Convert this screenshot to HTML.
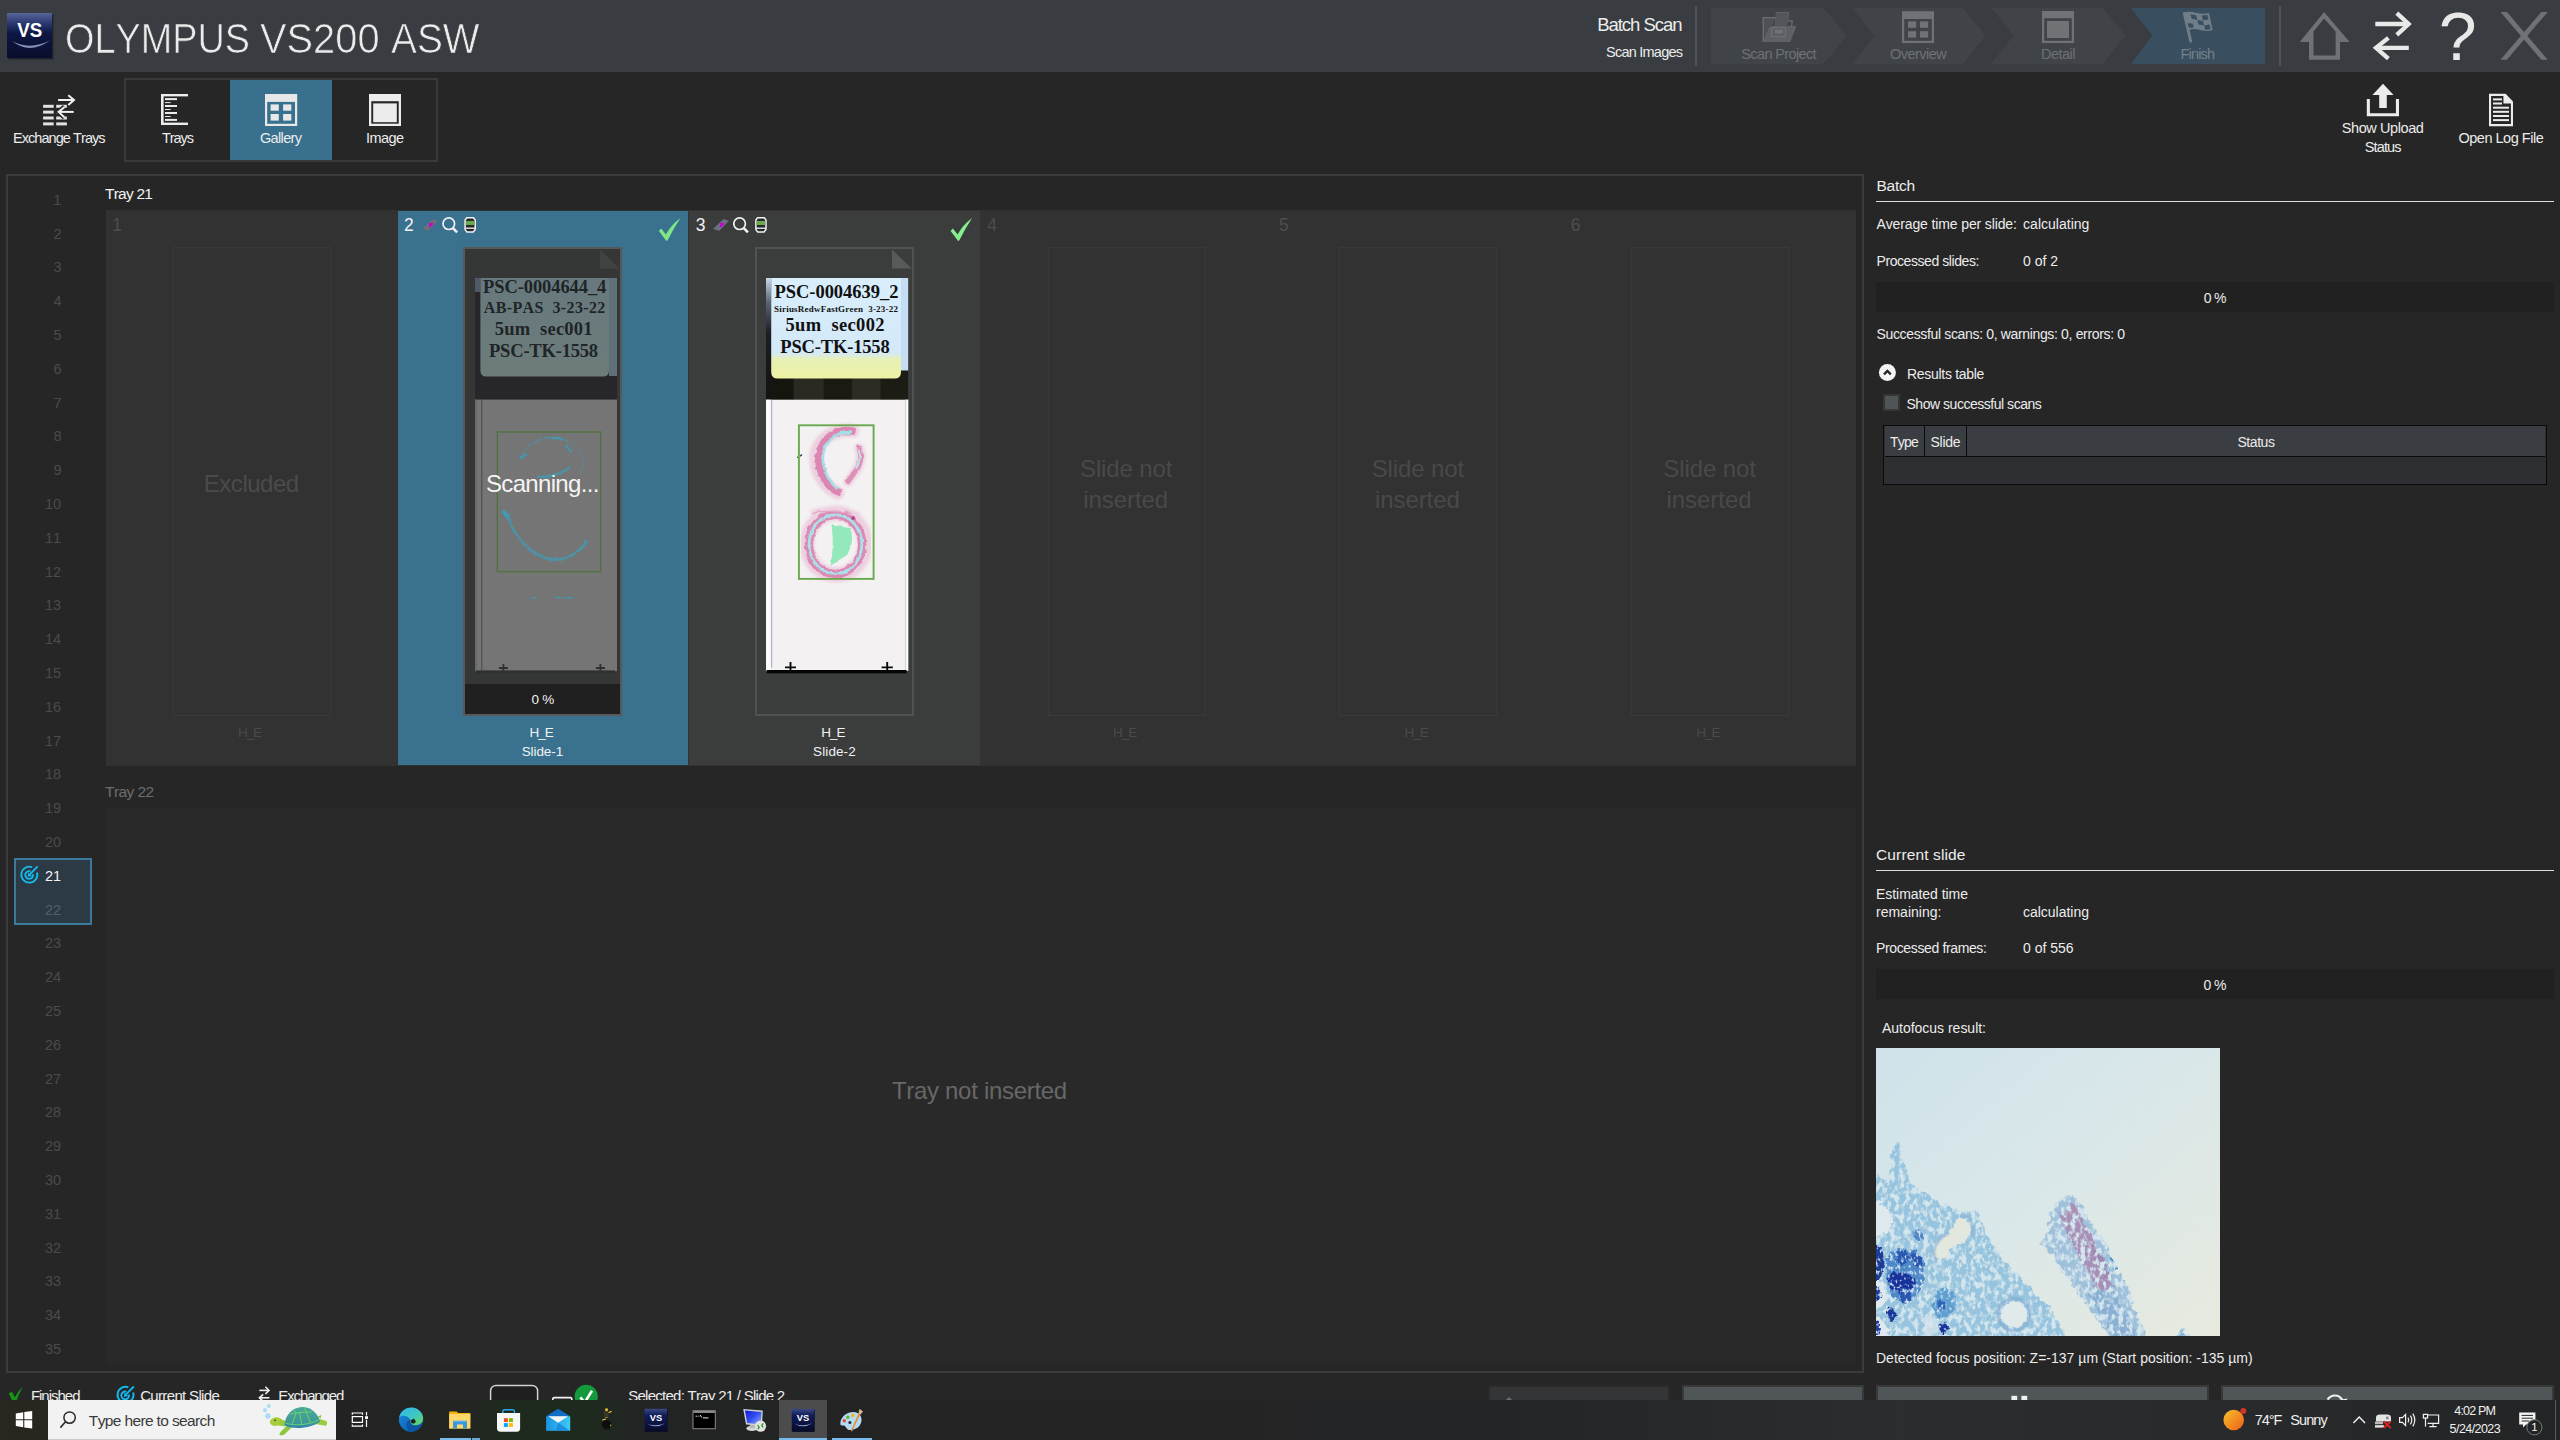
<!DOCTYPE html>
<html lang="en"><head><meta charset="utf-8"><title>OLYMPUS VS200 ASW - Batch Scan</title>
<style>
html,body{margin:0;padding:0;background:#262626;}
body{width:2560px;height:1440px;overflow:hidden;font-family:"Liberation Sans",sans-serif;}
#root{position:relative;width:2560px;height:1440px;overflow:hidden;background:#262626;}
.a{position:absolute;box-sizing:border-box;}
.t{position:absolute;white-space:pre;line-height:normal;font-kerning:none;z-index:2;margin:0;padding:0;}
.bm{display:inline-block;width:0;height:0;}
svg{position:absolute;overflow:visible;}
</style></head><body><div id="root">
<!-- ================= header bar ================= -->
<div class="a" style="left:0;top:0;width:2560px;height:72px;background:#393c40"></div>
<svg style="left:0;top:0" width="2560" height="172" viewBox="0 0 2560 172">
 <defs>
  <linearGradient id="vsg" x1="0" y1="0" x2="0" y2="1">
   <stop offset="0" stop-color="#56659a"/><stop offset="0.22" stop-color="#2c3a72"/><stop offset="0.45" stop-color="#0e1744"/><stop offset="1" stop-color="#090e2c"/>
  </linearGradient>
 </defs>
 <!-- VS logo -->
 <rect x="8.5" y="14.5" width="45" height="45" fill="#1b1d22" opacity=".75"/>
 <rect x="7" y="13" width="45" height="45" fill="url(#vsg)"/>
 <path d="M12 41 Q29.5 55 50 40.5 Q29.5 50.5 12 41Z" fill="#9aa6cc" opacity=".85"/>
 <text x="29.8" y="36.8" text-anchor="middle" font-family="Liberation Sans, sans-serif" font-weight="700" font-size="19.5" fill="#ffffff" textLength="25" lengthAdjust="spacingAndGlyphs">VS</text>
 <!-- separators -->
 <rect x="1695" y="6.2" width="2" height="59.8" fill="#505356"/>
 <rect x="2279" y="6.2" width="2" height="59.8" fill="#505356"/>
 <!-- wizard steps -->
 <polygon points="1711,8 1823.4,8 1847,35.4 1823.4,64 1711,64" fill="#404448"/>
 <polygon points="1852.2,8 1962.8,8 1985.6,35.4 1962.8,64 1852.2,64 1874.5,35.4" fill="#404448"/>
 <polygon points="1991.3,8 2102.8,8 2125.5,35.4 2102.8,64 1991.3,64 2013.5,35.4" fill="#404448"/>
 <polygon points="2131,8 2265,8 2265,64 2131,64 2152.3,35.4" fill="#394f5f"/>
 <!-- step1: scan project (folder w/ docs) -->
 <g fill="none" stroke="#696c6f" stroke-width="1.3" stroke-linejoin="miter">
  <path d="M1763.4 41 V17.8 H1775.6" />
  <path d="M1775.2 30 L1776.6 12.6 H1788.4 L1787.6 20.6"/>
  <path d="M1785 20.8 H1792.2 L1791.6 26.4"/>
  <path d="M1769.4 27 H1795.2 L1789.6 41.2 H1763.2Z" fill="#595c5f"/>
  <path d="M1772 27.2 H1785.6 V36.6 H1771.6Z" fill="#4d5053"/>
 </g>
 <path d="M1776 12.6 H1788.4 L1787.4 26.6 H1775Z" fill="#52555a"/>
 <path d="M1769.4 27 H1795.2 L1789.6 41.2 H1763.2Z" fill="#5f6265" opacity=".8"/>
 <rect x="1771.8" y="27.6" width="13.6" height="9" fill="none" stroke="#6d7073" stroke-width="1.2"/>
 <rect x="1775" y="29.8" width="8" height="3.6" fill="#707376"/>
 <path d="M1763.4 41 V17.8 H1775.6" fill="none" stroke="#696c6f" stroke-width="1.4"/>
 <path d="M1764 18.4 H1775 L1772 27 H1769.2 L1764 40Z" fill="#4d5054"/>
 <!-- step2: overview -->
 <g>
  <rect x="1902" y="11.2" width="32" height="31.8" fill="#707275"/>
  <rect x="1904.2" y="19" width="27.6" height="21.8" fill="#404448"/>
  <rect x="1908" y="21.4" width="8.2" height="6.4" fill="#707275"/><rect x="1920" y="21.4" width="8.2" height="6.4" fill="#707275"/>
  <rect x="1908" y="31.2" width="8.2" height="6.4" fill="#707275"/><rect x="1920" y="31.2" width="8.2" height="6.4" fill="#707275"/>
 </g>
 <!-- step3: detail -->
 <g>
  <rect x="2042" y="11" width="32" height="32" fill="#707275"/>
  <rect x="2044.2" y="18.2" width="27.6" height="22.6" fill="#404448"/>
  <rect x="2047" y="21" width="22" height="17" fill="#707275"/>
 </g>
 <!-- step4: flag -->
 <g>
  <path d="M2182.6 12.6 L2185.4 11.8 L2192.4 42 L2189.6 42.8Z" fill="#6f7e89"/>
  <path d="M2185 12.4 C2192 9.5 2199 16 2209 13 L2212.8 30 C2203 33.5 2197 26.5 2189 30Z" fill="#6f7e89"/>
  <g fill="#394f5f">
   <path d="M2190.6 14.3 l5.5 1 l1.2 4.6 l-5.6 -1.2Z"/><path d="M2201.8 15.6 l5.5 -.6 l1.1 4.4 l-5.6 .8Z"/>
   <path d="M2197.4 20 l5.6 .9 l1.1 4.5 l-5.6 -1Z"/><path d="M2192.8 23.6 l-5.2 -.4 l1 4.4 l5.2 .2Z"/>
   <path d="M2204.2 25.4 l5.4 -.8 l1 4.3 l-5.4 1Z"/><path d="M2192.9 23.4 l5.6 1 l1 4.2 l-5.6 -1.2Z" opacity="0"/>
  </g>
 </g>
 <!-- home (disabled) -->
 <path fill-rule="evenodd" fill="#6f7174" d="M2324.1 11.9 L2299.7 42.1 H2309 V59.8 H2340 V42.1 H2349.6 Z M2324.1 18.5 L2313.5 31.5 V55.5 H2335.6 V31.5 Z"/>
 <!-- swap arrows -->
 <g fill="none" stroke="#e9e9e9" stroke-width="4.3">
  <path d="M2375.3 24 H2408"/><path d="M2396.8 13.2 L2408.6 24 L2396.8 34.8" stroke-linejoin="miter"/>
  <path d="M2408.8 47.8 H2376"/><path d="M2388.4 37.8 L2376 47.8 L2388.4 58.6" stroke-linejoin="miter"/>
 </g>
 <!-- close X (disabled) -->
 <g fill="#6f7174"><path d="M2500.5 11.9 H2506.9 L2547.7 59.8 H2541.3Z"/><path d="M2547.7 11.9 H2541.3 L2500.5 59.8 H2506.9Z"/></g>
 <!-- ============ toolbar icons ============ -->
 <!-- exchange trays -->
 <g fill="#e2e2e2">
  <rect x="43.1" y="104.8" width="10.6" height="3"/><rect x="56.2" y="104.8" width="10.7" height="3"/>
  <rect x="43.1" y="110.6" width="10.6" height="3"/><rect x="56.2" y="110.6" width="10.7" height="3"/>
  <rect x="43.1" y="116.5" width="10.6" height="3"/><rect x="56.2" y="116.5" width="10.7" height="3"/>
  <rect x="43.1" y="122.4" width="10.6" height="3"/><rect x="56.2" y="122.4" width="10.7" height="3"/>
 </g>
 <g fill="none" stroke="#262626" stroke-width="5"><path d="M73.7 111.9 H60"/><path d="M64.6 107 L58.6 111.9 L64.6 117.4"/></g>
 <g fill="none" stroke="#f0f0f0" stroke-width="2">
  <path d="M58.1 100 H73.6"/><path d="M68.3 95.2 L74 100 L68.3 105"/>
  <path d="M73.7 111.9 H59.4"/><path d="M64.6 107 L58.6 111.9 L64.6 117.4"/>
 </g>
 <!-- trays -->
 <g fill="#ececec">
  <rect x="161" y="94" width="2.6" height="31"/><rect x="161" y="94" width="27" height="2.4"/><rect x="161" y="122.6" width="27" height="2.4"/>
  <rect x="165" y="98.1" width="12" height="2"/><rect x="165" y="105" width="12" height="2"/><rect x="165" y="112" width="12" height="2"/><rect x="165" y="118.9" width="12" height="2"/>
  <rect x="165" y="102.1" width="5.6" height="1"/><rect x="165" y="109" width="5.6" height="1"/><rect x="165" y="116" width="5.6" height="1"/>
 </g>
 <!-- image -->
 <g>
  <rect x="369" y="94" width="32" height="32" fill="#ececec"/>
  <rect x="371.3" y="101.2" width="27.4" height="22.5" fill="#262626"/>
  <rect x="373.2" y="103.4" width="23.6" height="18.8" fill="#ececec"/>
 </g>
 <!-- show upload status -->
 <g fill="#ececec">
  <path d="M2366.8 99 H2369.9 V113.2 H2395.9 V99 H2399 V116.3 H2366.8Z"/>
  <path d="M2383 83.8 L2393.6 95 H2386.8 V108 H2379.2 V95 H2372.4Z"/>
 </g>
 <!-- open log file -->
 <g>
  <path d="M2489 93.8 H2505.6 L2513 101.4 V126.2 H2489Z" fill="#ececec"/>
  <path d="M2491.1 96 H2503.4 V103.6 H2510.9 V124 H2491.1Z" fill="#262626"/>
  <g fill="#ececec"><rect x="2493" y="98.4" width="9" height="2"/><rect x="2493" y="102.5" width="9" height="2"/>
  <rect x="2493" y="106.7" width="16" height="2"/><rect x="2493" y="110.8" width="16" height="2"/><rect x="2493" y="115" width="16" height="2"/><rect x="2493" y="119.1" width="16" height="2"/></g>
 </g>
</svg>
<!-- toolbar view group -->
<div class="a" style="left:124px;top:78px;width:314px;height:84px;border:2px solid #3a3a3a"></div>
<div class="a" style="left:230px;top:80px;width:102px;height:80px;background:#38708d"></div>
<svg style="left:0;top:0" width="400" height="172" viewBox="0 0 400 172">
 <rect x="265" y="94" width="32.2" height="32" fill="#e8e8e8"/>
 <rect x="267.2" y="101.9" width="27.8" height="21.9" fill="#38708d"/>
 <rect x="270.6" y="104.4" width="8.2" height="6.3" fill="#e8e8e8"/><rect x="283.1" y="104.4" width="8.2" height="6.3" fill="#e8e8e8"/>
 <rect x="270.6" y="114" width="8.2" height="6.6" fill="#e8e8e8"/><rect x="283.1" y="114" width="8.2" height="6.6" fill="#e8e8e8"/>
</svg>

<!-- ================= main gallery panel ================= -->
<div class="a" style="left:6px;top:174px;width:1858px;height:1199px;border:2px solid #3b3b3b"></div>
<!-- tray index highlight -->
<div class="a" style="left:14px;top:858px;width:78px;height:67px;background:#2b3a44;border:2px solid #3a7a9c"></div>
<svg style="left:18px;top:862px" width="24" height="24" viewBox="0 0 24 24">
 <g fill="none" stroke="#14b9ee" stroke-width="1.9">
  <path d="M14.2 5.2 A8 8 0 1 0 19 10.4"/>
  <path d="M12.4 9.3 A3.9 3.9 0 1 0 15 12.2"/>
  <path d="M19.6 4.4 L11.4 12.8"/>
 </g>
 <path d="M9.6 14.8 L10.4 10.4 L14 14Z" fill="#14b9ee"/>
</svg>
<!-- tray 21 container -->
<div class="a" style="left:105.5px;top:210px;width:1750px;height:555.5px;background:#323232"></div>
<div class="a" style="left:398px;top:211px;width:290.3px;height:554.4px;background:#39718e"></div>
<div class="a" style="left:689px;top:211px;width:290.6px;height:554.4px;background:#3b3d3d"></div>
<!-- empty thumb frames -->
<div class="a" style="left:172.6px;top:247.4px;width:158px;height:468.4px;border:1.2px solid #393939"></div>
<div class="a" style="left:1047.8px;top:247.4px;width:158px;height:468.4px;border:1.2px solid #393939"></div>
<div class="a" style="left:1339.3px;top:247.4px;width:158px;height:468.4px;border:1.2px solid #393939"></div>
<div class="a" style="left:1631px;top:247.4px;width:158px;height:468.4px;border:1.2px solid #393939"></div>
<!-- tray 22 container -->
<div class="a" style="left:105.5px;top:808px;width:1750px;height:556.2px;background:#292929"></div>
<!-- ================= slide thumbnails (tray 21) ================= -->
<svg style="left:0;top:0" width="1000" height="780" viewBox="0 0 1000 780">
 <defs>
  <linearGradient id="lab3" x1="0" y1="0" x2="0" y2="1">
   <stop offset="0" stop-color="#d9eefc"/><stop offset="0.745" stop-color="#d4e9f8"/><stop offset="0.81" stop-color="#e8f0b4"/><stop offset="1" stop-color="#eef2a4"/>
  </linearGradient>
  <linearGradient id="lstrip3" x1="0" y1="0" x2="0" y2="1">
   <stop offset="0" stop-color="#c9d9ea"/><stop offset="0.2" stop-color="#5a6474"/><stop offset="0.45" stop-color="#1c1e24"/><stop offset="1" stop-color="#121214"/>
  </linearGradient>
  <linearGradient id="band3" x1="0" y1="0" x2="1" y2="0">
   <stop offset="0" stop-color="#15150f"/><stop offset="0.19" stop-color="#15150f"/><stop offset="0.2" stop-color="#2a2a22"/><stop offset="0.4" stop-color="#2a2a22"/><stop offset="0.41" stop-color="#1a1a13"/><stop offset="0.6" stop-color="#1a1a13"/><stop offset="0.61" stop-color="#2c2c24"/><stop offset="0.8" stop-color="#2c2c24"/><stop offset="0.81" stop-color="#1c1c15"/><stop offset="1" stop-color="#1c1c15"/>
  </linearGradient>
  <linearGradient id="lab2" x1="0" y1="0" x2="0" y2="1">
   <stop offset="0" stop-color="#67797e"/><stop offset="1" stop-color="#6d7c7a"/>
  </linearGradient>
  <filter id="b1" x="-10%" y="-10%" width="120%" height="120%"><feGaussianBlur stdDeviation="0.7"/></filter>
  <filter id="tis" x="-10%" y="-10%" width="120%" height="120%"><feTurbulence type="fractalNoise" baseFrequency="0.18" numOctaves="2" seed="5" result="n"/><feDisplacementMap in="SourceGraphic" in2="n" scale="3.2" xChannelSelector="R" yChannelSelector="G"/><feGaussianBlur stdDeviation="0.55"/></filter>
  <filter id="b2" x="-10%" y="-10%" width="120%" height="120%"><feGaussianBlur stdDeviation="1.4"/></filter>
  <!-- header icons for a slide cell (origin = cell x) -->
  <g id="hdr">
   <path d="M24.1 228.8 L34.6 219.1 L39.9 221.1 L30.1 231.1Z" fill="#6c6e80"/>
   <path d="M30.9 223 h4 v2.3 h-1.8 v1.6 h-2.2Z" fill="#cc00cc"/>
   <circle cx="50.6" cy="223.7" r="5.8" fill="none" stroke="#f2f2f2" stroke-width="1.7"/>
   <path d="M54.8 228.2 L58.9 232.4" stroke="#f2f2f2" stroke-width="2.6" fill="none"/>
   <path d="M68.6 217.8 H75.3 L77 220 V229.6 L75 232 H68.8 L66.9 229.6 V220Z" fill="#26282a" stroke="#f2f2f2" stroke-width="1.5" stroke-linejoin="round"/>
   <rect x="67.7" y="221" width="8.6" height="4" fill="#6aa84f"/>
   <path d="M67 228.2 H77" stroke="#f2f2f2" stroke-width="1.3"/>
  </g>
  <path id="chk" d="M952.9 228.6 L950.6 230.9 L958.1 240.9 L959.4 240.2 Q964.5 229.5 972.1 217.9 Q962.5 225 957.6 234.6 Z"/>
 </defs>

 <!-- ===== cell 2 (selected, scanning, dimmed) ===== -->
 <use href="#hdr" x="398.2" y="0"/>
 <use href="#chk" x="-291.7" y="0" fill="#80e585"/>
 <rect x="464" y="248" width="157" height="467" fill="#353737" stroke="#575858" stroke-width="2"/>
 <path d="M600 249.4 V268.8 H619.8Z" fill="#414243"/>
 <!-- slide body -->
 <rect x="475" y="278" width="142" height="122" fill="#27262b"/>
 <rect x="475" y="278" width="5.4" height="14" fill="#50596a"/>
 <rect x="609" y="278" width="8" height="98" fill="#5f707a"/>
 <path d="M480.4 278 H609 V370.5 Q609 376.5 603 376.5 H486.4 Q480.4 376.5 480.4 370.5Z" fill="url(#lab2)"/>
 <rect x="475" y="399.6" width="142" height="271.6" fill="#757575"/>
 <rect x="481.2" y="399.6" width="1.1" height="271" fill="#4c4c4c"/>
 <rect x="475" y="399.6" width="2" height="271" fill="#6a6a6a"/>
 <rect x="476" y="670.4" width="139" height="2.8" fill="#2f3030"/>
 <path d="M503.4 664 V671 M499 668 H508 M600.4 664 V671 M596 668 H605" stroke="#2f3030" stroke-width="1.8" fill="none"/>
 <!-- tissue (dim cyan) -->
 <g fill="none" stroke="#3f9cb8" stroke-linecap="round" filter="url(#tis)">
  <path d="M521 459 C522 452 529 443 541 439 C551 436 562 437 567 441" stroke-width="2.4" opacity=".38" stroke-dasharray="9 3 5 4"/>
  <path d="M552 437.5 L562 439.5 M566 446 L571 451" stroke-width="2.6" opacity=".75"/>
  <path d="M521 457 L526 455" stroke-width="3" opacity=".7"/>
  <path d="M538 476.5 C545 478 560 475 569 468" stroke-width="2.6" opacity=".75"/>
  <path d="M572 443 C583 450 586 464 580 474" stroke-width="2" opacity=".22"/>
  <path d="M503 513 C506 515 509 519 511 524 C518 542 535 557 552 559.5 C566 561 580 552 587 541" stroke-width="3" opacity=".7"/>
  <path d="M503 512 L508 516" stroke-width="4.5" opacity=".8"/>
  <path d="M530 598.3 H536 M556 597.5 H574" stroke-width="1.3" opacity=".8"/>
 </g>
 <rect x="497.3" y="432" width="103.4" height="139.6" fill="none" stroke="#52723f" stroke-width="1.4"/>
 <!-- progress strip -->
 <rect x="465" y="684" width="155" height="30" fill="#202020"/>

 <!-- ===== cell 3 ===== -->
 <use href="#hdr" x="689" y="0"/>
 <use href="#chk" x="0" y="0" fill="#86ee8e"/>
 <rect x="756" y="248" width="157" height="467" fill="#3b3d3d" stroke="#4f5152" stroke-width="2"/>
 <path d="M892 249.5 V268.4 H911.6Z" fill="#57595b"/>
 <rect x="766" y="278" width="142.2" height="122" fill="url(#band3)"/>
 <rect x="766" y="278" width="5.2" height="122" fill="url(#lstrip3)"/>
 <rect x="901" y="278" width="7.2" height="92.5" fill="#c4dcf4"/>
 <path d="M771.2 278 H901 V372 Q901 378.6 894.5 378.6 H777.7 Q771.2 378.6 771.2 372Z" fill="url(#lab3)"/>
 <rect x="766" y="399.7" width="142.2" height="271" fill="#f3f1f2"/>
 <rect x="766" y="399.7" width="4.6" height="271" fill="#fbfbfb"/>
 <rect x="771.2" y="399.7" width="1" height="268" fill="#a9a2bd"/>
 <rect x="905.2" y="399.7" width="1" height="271" fill="#c9c6d2"/>
 <rect x="906.2" y="399.7" width="2" height="271" fill="#fdfdfd"/>
 <rect x="766.6" y="670" width="140" height="3.3" fill="#050505"/>
 <path d="M790.5 662 V671 M785 667.4 H796 M887.2 662 V671 M881.6 667.4 H892.8" stroke="#0a0a0a" stroke-width="1.9" fill="none"/>
 <!-- tissue top (C shape) -->
 <g fill="none" stroke-linecap="round">
  <g filter="url(#b2)" opacity=".42" stroke="#e3a3c6">
   <path d="M853 431 C838 428 822 436 817 450 C812 466 822 486 838 493" stroke-width="13"/>
   <path d="M859 448 C863 456 860 466 855 472 L848 482" stroke-width="9"/>
   <ellipse cx="836" cy="544" rx="29" ry="31" stroke-width="15"/>
   <path d="M812 512 C824 507 846 508 858 514" stroke-width="4"/>
  </g>
  <g filter="url(#tis)">
   <path d="M852 431 C839 428.5 825 436 820 450 C815.5 466 824.5 485 838 492" stroke="#d774a6" stroke-width="7.6" opacity=".8"/>
   <path d="M850 432.6 C839 431 828.5 438 824 450 C820 464 827 480.5 837 488" stroke="#a6dfe8" stroke-width="2.6"/>
   <path d="M858.5 447 C862.5 456 860.5 465 855.5 471 L848 481.5" stroke="#db84b0" stroke-width="5" opacity=".82"/>
   <path d="M858.6 450 C861 456 859.5 463 856 468" stroke="#bfe6ec" stroke-width="1.8"/>
   <path d="M797.6 457.4 L801.8 455" stroke="#3a4a6a" stroke-width="1.5"/>
   <ellipse cx="835.5" cy="544.3" rx="26.6" ry="29.6" stroke="#d774a6" stroke-width="8.4" opacity=".78"/>
   <ellipse cx="835.5" cy="544.3" rx="26.4" ry="29.4" stroke="#a9e0e9" stroke-width="2.8"/>
   <path d="M813 513.5 C822 510.5 840 510.5 851 513.5" stroke="#e3a8c8" stroke-width="1.6"/>
   <path d="M831.6 525 L850 528 Q855.5 540 847 555 L830.6 565.5 Q834.5 545 831.6 525Z" fill="#93e9ba" stroke="none"/>
   <circle cx="853" cy="518" r="2" fill="#b8448c" stroke="none"/>
  </g>
 </g>
 <rect x="798.9" y="425.3" width="74.7" height="153.6" fill="none" stroke="#6aa84f" stroke-width="1.9"/>
</svg>
<!-- ================= right info panel ================= -->
<div class="a" style="left:1876px;top:200.8px;width:678px;height:1.5px;background:#dcdcdc"></div>
<div class="a" style="left:1876px;top:282px;width:678px;height:30px;background:#212121"></div>
<!-- results expander -->
<svg style="left:1878px;top:363px" width="20" height="20" viewBox="0 0 20 20">
 <circle cx="9.4" cy="9.6" r="8.5" fill="#f4f4f4"/>
 <path d="M6 11.4 L9.4 7.9 L12.8 11.4" fill="none" stroke="#262626" stroke-width="2.3"/>
</svg>
<div class="a" style="left:1883.2px;top:394.3px;width:17px;height:16.6px;background:#4f5457;border:2px solid #363636"></div>
<!-- results table -->
<div class="a" style="left:1883px;top:425px;width:664px;height:60.2px;background:#2d2f33;border:1.6px solid #0a0a0a"></div>
<div class="a" style="left:1884.6px;top:426.2px;width:660.8px;height:30.9px;background:#3a3d41;border-bottom:1.3px solid #0a0a0a"></div>
<div class="a" style="left:1923.8px;top:426px;width:1.3px;height:30px;background:#0a0a0a"></div>
<div class="a" style="left:1965.6px;top:426px;width:1.3px;height:30px;background:#0a0a0a"></div>
<!-- current slide -->
<div class="a" style="left:1876px;top:869.8px;width:678px;height:1.5px;background:#dcdcdc"></div>
<div class="a" style="left:1876px;top:969px;width:678px;height:30.2px;background:#212121"></div>
<!-- autofocus image -->
<svg style="left:1876px;top:1048px" width="344" height="288" viewBox="0 0 344 288">
 <defs>
  <linearGradient id="afbg" x1="0" y1="0" x2="1" y2="1">
   <stop offset="0" stop-color="#d0e3ea"/><stop offset="0.45" stop-color="#dae8ea"/><stop offset="1" stop-color="#e9ebdf"/>
  </linearGradient>
  <clipPath id="afc"><rect x="0" y="0" width="344" height="288"/></clipPath>
  <!-- ragged edge + fibrous texture -->
  <filter id="afrag" x="-5%" y="-5%" width="110%" height="110%" color-interpolation-filters="sRGB">
   <feTurbulence type="fractalNoise" baseFrequency="0.16" numOctaves="2" seed="11" result="n1"/>
   <feDisplacementMap in="SourceGraphic" in2="n1" scale="9" xChannelSelector="R" yChannelSelector="G" result="d"/>
   <feGaussianBlur in="d" stdDeviation="0.5" result="db"/>
   <feTurbulence type="fractalNoise" baseFrequency="0.21 0.15" numOctaves="3" seed="4" result="n2"/>
   <feColorMatrix in="n2" type="matrix" values="0 0 0 0 0.83  0 0 0 0 0.90  0 0 0 0 0.93  0 0 0 4.6 -2.0" result="pale"/>
   <feComposite in="pale" in2="db" operator="in" result="paleIn"/>
   <feMerge><feMergeNode in="db"/><feMergeNode in="paleIn"/></feMerge>
  </filter>
  <filter id="afblob" x="-10%" y="-10%" width="120%" height="120%" color-interpolation-filters="sRGB">
   <feTurbulence type="fractalNoise" baseFrequency="0.2" numOctaves="2" seed="21" result="n1"/>
   <feDisplacementMap in="SourceGraphic" in2="n1" scale="7" xChannelSelector="R" yChannelSelector="G" result="d"/>
   <feGaussianBlur in="d" stdDeviation="0.7"/>
  </filter>
  <filter id="afblob2" x="-10%" y="-10%" width="120%" height="120%" color-interpolation-filters="sRGB">
   <feTurbulence type="fractalNoise" baseFrequency="0.2" numOctaves="2" seed="21" result="n1"/>
   <feDisplacementMap in="SourceGraphic" in2="n1" scale="7" xChannelSelector="R" yChannelSelector="G" result="d"/>
   <feGaussianBlur in="d" stdDeviation="0.7" result="db"/>
   <feTurbulence type="fractalNoise" baseFrequency="0.28 0.22" numOctaves="2" seed="9" result="n2"/>
   <feColorMatrix in="n2" type="matrix" values="0 0 0 0 0.80  0 0 0 0 0.88  0 0 0 0 0.95  0 0 0 5 -2.6" result="pale"/>
   <feComposite in="pale" in2="db" operator="in" result="paleIn"/>
   <feMerge><feMergeNode in="db"/><feMergeNode in="paleIn"/></feMerge>
  </filter>
  <filter id="afgrain" x="0" y="0" width="100%" height="100%" color-interpolation-filters="sRGB">
   <feTurbulence type="fractalNoise" baseFrequency="0.9" numOctaves="1" seed="2" result="g"/>
   <feColorMatrix in="g" type="matrix" values="0 0 0 0 0.72  0 0 0 0 0.80  0 0 0 0 0.84  0 0 0 0.9 -0.36"/>
  </filter>
  <filter id="afsoft"><feGaussianBlur stdDeviation="1.2"/></filter>
 </defs>
 <rect width="344" height="288" fill="url(#afbg)"/>
 <rect width="344" height="288" filter="url(#afgrain)" opacity=".35"/>
 <g clip-path="url(#afc)">
  <!-- main tissue mass -->
  <g filter="url(#afrag)">
   <path d="M-8 124 L4 130 L12 132 L16 118 L18 96 L22 92 L26 110 L34 134 L52 148 L64 156 L78 160 L88 166 L100 162 L106 174 L112 190 L132 218 L152 238 L172 258 L184 276 L194 296 L-8 296Z" fill="#96c3dd"/>
   <path d="M176 160 L184 152 L196 146 L206 160 L218 180 L232 200 L240 222 L252 240 L258 262 L268 282 L274 296 L236 296 L220 270 L198 238 L176 208 L166 196 L172 180Z" fill="#9fc0da"/>
   <path d="M296 296 L306 280 L320 296Z" fill="#86b6d8"/>
   <!-- mauve streaks in 2nd fragment -->
   <path d="M184 168 L198 156 L216 188 L232 222 L238 240 L222 244 L204 212 L192 188Z" fill="#a68bb2" opacity=".9"/>
   <path d="M196 152 L204 168 L200 172 L192 158Z" fill="#ad90b6" opacity=".85"/>
   <path d="M214 200 L222 196 L234 226 L228 230Z" fill="#9b86b2" opacity=".8"/>
   <path d="M212 246 L236 238 L250 268 L262 290 L240 296 L226 272Z" fill="#86aed2" opacity=".9"/>
   <circle cx="236" cy="212" r="1.6" fill="#3b8fd0"/><circle cx="240" cy="220" r="1.4" fill="#3b8fd0"/>
  </g>
  <!-- lumens / pale holes -->
  <g filter="url(#afblob)">
   <path d="M-6 150 C6 152 16 162 16 174 C14 186 4 190 -6 188Z" fill="#dde9ec"/>
   <path d="M84 170 C92 168 96 176 94 186 C92 194 82 196 76 200 C72 208 66 214 60 210 C56 202 62 192 70 188 C76 182 78 174 84 170Z" fill="#e3e8de"/>
   <circle cx="138" cy="266.5" r="13.5" fill="#e1eaeb"/>
   <path d="M-6 226 C8 230 14 244 8 256 C2 262 -4 262 -6 262Z" fill="#dfe9ee"/>
   <path d="M-4 270 C6 268 14 276 12 290 L-4 292Z" fill="#dfe8ee"/>
   <path d="M46 270 C54 262 66 270 62 284 L48 292Z" fill="#d6e4ec" opacity=".8"/>
  </g>
  <circle cx="138" cy="266.5" r="16" fill="none" stroke="#7fa9cf" stroke-width="2.6" filter="url(#afsoft)" opacity=".85"/>
  <path d="M84 168 C94 166 98 176 96 188 M60 212 C54 202 62 190 72 186" fill="none" stroke="#86a9cf" stroke-width="1.6" filter="url(#afsoft)"/>
  <ellipse cx="30" cy="228" rx="21" ry="23" fill="none" stroke="#9cc3de" stroke-width="1.6" opacity=".8"/>
  <!-- medium + dark blue clusters -->
  <g filter="url(#afblob2)">
   <path d="M14 204 C26 198 46 200 48 214 C50 230 44 246 34 252 C26 256 14 250 12 238 C10 226 8 212 14 204Z" fill="#4f88c6"/>
   <path d="M60 244 C68 236 80 240 80 252 C80 264 70 272 62 270 C56 264 56 252 60 244Z" fill="#5f9fd0"/>
   <path d="M36 186 C42 180 50 184 48 190 C44 194 38 192 36 186Z" fill="#4f88c6"/>
   <path d="M-4 196 C6 194 10 206 8 216 C6 228 2 236 -4 238Z" fill="#1c3a98"/>
   <path d="M20 204 C28 200 36 204 34 212 C32 218 22 218 20 212Z" fill="#2858b0"/>
   <path d="M36 206 C44 202 48 210 46 216 C42 222 34 218 36 206Z" fill="#2a57ae"/>
   <path d="M14 226 C24 222 40 226 40 236 C36 246 22 248 14 240Z" fill="#17329a"/>
   <path d="M24 240 C32 238 38 246 34 254 C28 258 22 250 24 240Z" fill="#2a57ae"/>
   <path d="M-4 238 C4 236 8 246 4 252 L-4 254Z" fill="#1d3c9c"/>
   <path d="M12 260 C20 256 22 268 16 274 C10 274 10 266 12 260Z" fill="#1a379a"/>
   <path d="M-4 272 C4 272 6 282 2 288 L-4 288Z" fill="#1d3c9c"/>
   <path d="M62 252 C68 250 72 256 68 262 C64 264 60 258 62 252Z" fill="#2d63b6"/>
   <path d="M62 278 l8 -4 l4 8 l-8 4Z" fill="#17329a"/>
  </g>
 </g>
</svg>
<!-- bottom action buttons (cut by taskbar) -->
<div class="a" style="left:1487.5px;top:1385px;width:182.5px;height:40px;background:#333537;border:2.2px solid #2a2a2a"></div>
<div class="a" style="left:1681.9px;top:1384.8px;width:182.4px;height:40px;background:#505558;border:2.1px solid #393939"></div>
<div class="a" style="left:1875.8px;top:1384.8px;width:333px;height:40px;background:#505558;border:2.1px solid #393939"></div>
<div class="a" style="left:2221px;top:1384.8px;width:333px;height:40px;background:#505558;border:2.1px solid #393939"></div>
<svg style="left:0;top:1380px" width="2560" height="24" viewBox="0 1380 2560 24">
 <path d="M1506 1400 L1509 1397 L1512 1400Z" fill="#6a6c6e"/>
 <rect x="2011.4" y="1395.8" width="5.8" height="6" fill="#f0f0f0"/><rect x="2021.4" y="1395.8" width="5.8" height="6" fill="#f0f0f0"/>
 <path d="M2327.6 1399.6 C2331 1394.4 2338.6 1393.6 2342.6 1400.4" fill="none" stroke="#f0f0f0" stroke-width="2.2"/>
 <path d="M2338.4 1400 L2347.6 1398.4 L2345 1403Z" fill="#f0f0f0"/>
 <!-- legend icons -->
 <path d="M8.8 1393.6 L11.8 1391.4 L14.8 1397.2 Q18.6 1390.6 23 1386.6 Q19.2 1393 15.6 1402.6 L13.2 1402.6Z" fill="#149814"/>
 <g fill="none" stroke="#12b8ee" stroke-width="1.9">
  <path d="M128.4 1387.3 A8 8 0 1 0 133.2 1392.5"/>
  <path d="M126.4 1391.7 A3.9 3.9 0 1 0 129 1394.5"/>
  <path d="M133.8 1386.5 L125.6 1394.9"/>
 </g>
 <path d="M123.8 1396.9 L124.6 1392.5 L128.2 1396.1Z" fill="#12b8ee"/>
 <g fill="none" stroke="#f0f0f0" stroke-width="1.6">
  <path d="M259.4 1390.4 H268.6"/><path d="M265.4 1386.8 L269 1390.4 L265.4 1394"/>
  <path d="M269.4 1397.8 H259.8"/><path d="M263.2 1394.4 L259.4 1397.8 L263.2 1401.4"/>
 </g>
 <rect x="490.6" y="1385.4" width="47" height="30" rx="5.5" fill="#1f1f1f" stroke="#d2d2d2" stroke-width="1.5"/>
 <rect x="552.8" y="1397.6" width="19" height="10" rx="1.5" fill="none" stroke="#f2f2f2" stroke-width="1.6"/>
 <circle cx="586.2" cy="1396.4" r="11.6" fill="#14993c"/>
 <path d="M580.4 1397.4 L584.6 1402.6 L592 1390.8" fill="none" stroke="#ffffff" stroke-width="2.6"/>
</svg>
<!-- ================= windows taskbar ================= -->
<div class="a" style="left:0;top:1400px;width:2560px;height:40px;z-index:5;background:linear-gradient(90deg,#29271f 0px,#27261f 46px,#222322 360px,#222522 470px,#1f2a1e 500px,#1f2a1e 590px,#222423 640px,#232324 900px,#242526 1500px,#2b2d2f 1900px,#28292b 2300px,#232425 2560px)">
 <div class="a" style="left:779px;top:0;width:48.2px;height:40px;background:#4c4c4c"></div>
 <div class="a" style="left:48px;top:0;width:288px;height:40px;background:#f2f2f2;border-bottom:1.4px solid #c9c9c9"></div>
 <div class="a" style="left:440.2px;top:37.9px;width:31px;height:2.1px;background:#78bbef"></div>
 <div class="a" style="left:472.4px;top:37.9px;width:7.2px;height:2.1px;background:#6aa6d6"></div>
 <div class="a" style="left:779px;top:37.9px;width:48.2px;height:2.1px;background:#78bbef"></div>
 <div class="a" style="left:832px;top:37.9px;width:40px;height:2.1px;background:#78bbef"></div>
 <div class="a" style="left:2555.2px;top:0;width:1px;height:40px;background:#5a5a5a"></div>
 <svg style="left:0;top:0" width="2560" height="40" viewBox="0 1400 2560 40">
  <defs>
   <linearGradient id="vst" x1="0" y1="0" x2="0" y2="1"><stop offset="0" stop-color="#3b4a86"/><stop offset="0.3" stop-color="#0f1c5a"/><stop offset="1" stop-color="#070b2a"/></linearGradient>
   <linearGradient id="edge1" x1="0" y1="0" x2="1" y2="1"><stop offset="0" stop-color="#2fb6ee"/><stop offset="0.55" stop-color="#3fc8c0"/><stop offset="1" stop-color="#66d64e"/></linearGradient>
   <linearGradient id="edge2" x1="0" y1="0" x2="1" y2="1"><stop offset="0" stop-color="#1b8fe6"/><stop offset="1" stop-color="#0b4f9e"/></linearGradient>
   <linearGradient id="sun" x1="0" y1="0" x2="1" y2="1"><stop offset="0" stop-color="#f6c22c"/><stop offset="1" stop-color="#ee5d17"/></linearGradient>
   <linearGradient id="mailg" x1="0" y1="0" x2="1" y2="0"><stop offset="0" stop-color="#1b93e4"/><stop offset="1" stop-color="#3ccbf5"/></linearGradient>
   <linearGradient id="shell" x1="0" y1="0" x2="0" y2="1"><stop offset="0" stop-color="#4aa79a"/><stop offset="0.7" stop-color="#3d9b96"/><stop offset="1" stop-color="#2f7fae"/></linearGradient>
   <linearGradient id="rdp" x1="0" y1="0" x2="1" y2="1"><stop offset="0" stop-color="#1418d8"/><stop offset="0.5" stop-color="#3050f0"/><stop offset="1" stop-color="#9ab0ff"/></linearGradient>
   <g id="vsicon">
    <rect x="0.6" y="0.8" width="22.4" height="22.2" fill="#0a0d24"/>
    <rect x="0" y="0" width="22.4" height="22.2" fill="url(#vst)"/>
    <path d="M2.4 14.6 Q11.2 20.4 20.6 14.4 Q11.2 18.4 2.4 14.6Z" fill="#a9b4d8" opacity=".9"/>
    <text x="11.3" y="12.4" text-anchor="middle" font-family="Liberation Sans, sans-serif" font-weight="700" font-size="9.6" fill="#ffffff" textLength="12.4" lengthAdjust="spacingAndGlyphs">VS</text>
   </g>
  </defs>
  <!-- start -->
  <g fill="#ffffff"><path d="M15.8 1413.4 L23.2 1412.3 V1419.2 H15.8Z"/><path d="M24.3 1412.1 L32.2 1411 V1419.2 H24.3Z"/><path d="M15.8 1420.3 H23.2 V1427.2 L15.8 1426.1Z"/><path d="M24.3 1420.3 H32.2 V1428.5 L24.3 1427.4Z"/></g>
  <!-- search glyph -->
  <circle cx="69.6" cy="1417.6" r="5.7" fill="none" stroke="#2b2b2b" stroke-width="1.5"/><path d="M65.5 1421.8 L60.4 1427.6" stroke="#2b2b2b" stroke-width="1.6"/>
  <!-- turtle -->
  <g>
   <circle cx="268.8" cy="1406" r="1.9" fill="#a9dcf8"/><circle cx="265" cy="1410.3" r="2.1" fill="#a9dcf8"/><circle cx="267.9" cy="1416" r="2.7" fill="#a9dcf8"/>
   <path d="M319 1418.8 L326.6 1421 Q328 1424.4 325.6 1425.8 L316.6 1424.2Z" fill="#9acb45"/>
   <path d="M317.8 1416.8 L321.6 1414.8 L320.6 1418.4Z" fill="#8cc63f"/>
   <path d="M287 1425.6 L281 1431.4 Q278 1434.6 280.8 1435.6 L284.4 1434.4 L291.6 1427.4Z" fill="#8cc63f"/>
   <ellipse cx="276" cy="1421.6" rx="6.2" ry="4.3" fill="#a8cf3b" transform="rotate(-8 276 1421.6)"/>
   <path d="M280 1419 L286 1421 L285 1426.6 L278.6 1425.4Z" fill="#9fca40"/>
   <circle cx="275.1" cy="1420.3" r="0.9" fill="#4a2a4a"/>
   <path d="M284.4 1425.6 C285 1414.6 293 1407.2 302 1407 C312 1407 318.6 1414.6 320 1421.8 C312.6 1427.4 296 1430.6 284.4 1425.6Z" fill="url(#shell)"/>
   <g fill="none" stroke="#6fd868" stroke-width=".9">
    <path d="M285.6 1423.2 C296 1426.4 310 1424.6 318.8 1419.8"/><path d="M290 1414 C298 1412.6 306 1411.8 312 1412"/>
    <path d="M293.6 1409.6 L296.2 1413.2 L292 1424.4"/><path d="M304.6 1407.4 L306.2 1412 L310.8 1422.8"/><path d="M299.6 1412.8 L302 1424.8"/>
   </g>
  </g>
  <!-- task view -->
  <g fill="none" stroke="#ffffff" stroke-width="1.2">
   <rect x="352.3" y="1416.6" width="10.2" height="5.8"/>
   <path d="M352.3 1414.8 V1413 H362.5 V1414.8"/><path d="M352.3 1424.4 V1426.2 H362.5 V1424.4"/>
   <path d="M366.5 1412 V1415.6 M366.5 1420 V1427"/>
  </g>
  <rect x="365.1" y="1416.2" width="2.9" height="2.9" fill="#fff"/>
  <!-- edge -->
  <g>
   <circle cx="411" cy="1419.8" r="12.1" fill="url(#edge2)"/>
   <path d="M399.2 1417.6 C400.6 1410.6 406.4 1407.6 411.4 1407.6 C418.8 1407.8 423.2 1413.4 423.2 1418.6 C423 1423.8 418.6 1425.6 415 1425.4 C411 1425 409.4 1422.2 410.4 1419.8 C407.8 1415.6 401.8 1414.6 399.2 1417.6Z" fill="url(#edge1)"/>
   <path d="M410.4 1419.8 C409.2 1422.6 411 1425.2 415 1425.4 C417.6 1425.6 420 1424.6 421.6 1423 C420.4 1428.2 415.4 1432 410.2 1431.8 C405.6 1428.6 404.4 1421.4 410.4 1419.8Z" fill="#0b57a6"/>
   <path d="M410.6 1420.4 a2.6 2.6 0 1 0 5.2 0.8 l-2 -2.6Z" fill="#1f2021"/>
  </g>
  <!-- explorer -->
  <g>
   <path d="M449.2 1411.4 H456.6 L458 1413 H470.3 V1428.5 H449.2Z" fill="#f4b400"/>
   <path d="M449.2 1414 H470.3 V1428.5 H449.2Z" fill="#ffd869"/>
   <path d="M453 1421 H467 V1428.5 H463 V1424.6 H457 V1428.5 H453Z" fill="#3a96dd"/>
   <rect x="453" y="1420.6" width="14" height="1.4" fill="#5cb0ea"/>
  </g>
  <!-- store -->
  <g>
   <path d="M502.8 1414 V1411.6 Q502.8 1409.8 504.6 1409.8 H512.6 Q514.4 1409.8 514.4 1411.6 V1414" fill="none" stroke="#2aa5ec" stroke-width="1.5"/>
   <path d="M497 1413 H520.1 V1428.2 Q520.1 1431.8 516.6 1431.8 H500.5 Q497 1431.8 497 1428.2Z" fill="#f7f7f7"/>
   <rect x="503.9" y="1418.2" width="4" height="3.8" fill="#f25022"/><rect x="508.9" y="1418.2" width="4" height="3.8" fill="#7fba00"/>
   <rect x="503.9" y="1423.1" width="4" height="3.8" fill="#00a4ef"/><rect x="508.9" y="1423.1" width="4" height="3.8" fill="#ffb900"/>
  </g>
  <!-- mail -->
  <g>
   <path d="M546.1 1416.3 L558.1 1408.8 L570.2 1416.3Z" fill="#0f6fc6"/>
   <rect x="546.1" y="1416.3" width="24.1" height="14.5" fill="url(#mailg)"/>
   <path d="M548.2 1416.3 H568.1 L558.1 1422.7Z" fill="#f2f5f8"/>
   <path d="M558.1 1422.7 L570.2 1430.8 H556 Z" fill="#1681d8" opacity=".75"/>
  </g>
  <!-- usb eject -->
  <g>
   <path d="M605.2 1408.4 h2.6 v9.4 h-2.6Z" fill="#e7c23a"/><path d="M604.2 1411 h4.4 v6.4 h-4.4Z" fill="#3a3628"/>
   <path d="M608.6 1412.8 l3 -1.6 M602.4 1420.2 l3.4 -1" stroke="#e7c23a" stroke-width="1.3"/>
   <ellipse cx="606.6" cy="1424.2" rx="4.8" ry="4.4" fill="#0e0e0e"/><ellipse cx="606.4" cy="1428.6" rx="3.6" ry="1.2" fill="#151515"/>
   <rect x="610.2" y="1424.6" width="1" height="1.6" fill="#e7c23a"/>
  </g>
  <!-- VS pinned -->
  <use href="#vsicon" x="644.6" y="1408.8"/>
  <!-- cmd -->
  <g>
   <rect x="693" y="1410.7" width="22.3" height="18" fill="#000" stroke="#8a8a8a" stroke-width="1"/>
   <rect x="693.5" y="1411.2" width="21.3" height="1.6" fill="#a8a8a8"/>
   <path d="M695.6 1416.2 h1.8 M698.4 1416.2 h1 M700.2 1415 l1.6 2.6" stroke="#d8d8d8" stroke-width="1"/><rect x="703" y="1417.4" width="5.4" height="1" fill="#e6e6e6"/>
  </g>
  <!-- remote desktop -->
  <g>
   <ellipse cx="752" cy="1428.4" rx="5.6" ry="2.6" fill="#d4d4d4"/><path d="M750 1423 h5 l1 5 h-6.4Z" fill="#b8b8b8"/>
   <path d="M743.2 1409 L762.8 1410.6 L762 1425.8 L746 1424.4Z" fill="#cfcfcf"/>
   <path d="M745 1410.6 L761.4 1412 L760.8 1424.4 L747.2 1423Z" fill="url(#rdp)"/>
   <circle cx="760.5" cy="1426.2" r="5.6" fill="#e2e2e2"/>
   <path d="M757.6 1425.2 l1.6 2 l-1.4 2 M763.4 1423.4 l-1.6 2 l1.4 2" fill="none" stroke="#2a9a2a" stroke-width="1.3"/>
  </g>
  <!-- VS active -->
  <use href="#vsicon" x="791.7" y="1408.9"/>
  <!-- paint -->
  <g>
   <path d="M840.4 1424.6 C839.6 1418 846 1412 853.4 1412 C859.4 1412.2 862.4 1416.6 861.4 1421.6 C860.4 1427 855 1430.4 849.8 1430 C846.6 1429.8 846.6 1427.4 845 1426.2 C843.4 1425.2 841 1426.6 840.4 1424.6Z" fill="#b5d9f1"/>
   <circle cx="844.3" cy="1420.8" r="1.7" fill="#e0483c"/><circle cx="847.8" cy="1417.3" r="1.7" fill="#58b83a"/><circle cx="852.8" cy="1415.4" r="1.8" fill="#f2b51f"/><circle cx="849.9" cy="1422.6" r="1.5" fill="#22262a"/>
   <path d="M858.8 1413.2 L860.4 1414 L852 1431.6 L850.8 1431Z" fill="#e8892a"/><path d="M858.4 1413.6 L859.6 1408.8 L863 1411.4 L860.6 1414.6Z" fill="#d9b58a"/>
  </g>
  <!-- weather -->
  <circle cx="2233.7" cy="1420" r="10.3" fill="url(#sun)"/><circle cx="2243.3" cy="1410.9" r="2.9" fill="#d5342a"/>
  <!-- tray icons -->
  <path d="M2353.4 1423 L2359.2 1417 L2365 1423" fill="none" stroke="#f2f2f2" stroke-width="1.4"/>
  <g>
   <path d="M2376 1417.6 Q2376 1414.6 2380 1414.6 H2387 Q2391 1414.6 2391 1417.6 V1421.6 H2376Z" fill="#e4e4e4"/>
   <rect x="2375" y="1421.6" width="8" height="2.6" fill="#bdbdbd"/><rect x="2375" y="1425.2" width="9" height="2.4" fill="#e4e4e4"/>
   <rect x="2386" y="1416.6" width="2.6" height="2.6" fill="#8c8c8c"/>
   <path d="M2383.6 1421.4 L2390.8 1428 M2390.8 1421.4 L2383.6 1428" stroke="#e02020" stroke-width="1.9"/>
  </g>
  <g fill="none" stroke="#f2f2f2" stroke-width="1.2">
   <path d="M2399.6 1417.6 H2402.4 L2405.6 1414.4 V1425.6 L2402.4 1422.4 H2399.6Z"/>
   <path d="M2408 1417.6 Q2409.6 1420 2408 1422.4"/><path d="M2410.4 1415.6 Q2413.2 1420 2410.4 1424.4"/><path d="M2412.8 1413.6 Q2416.8 1420 2412.8 1426.4"/>
  </g>
  <g fill="none" stroke="#f2f2f2" stroke-width="1.2">
   <path d="M2427.6 1415 H2438.6 V1423.4 H2427.6"/><path d="M2433 1423.4 V1426.4 M2429.4 1426.6 H2436.6"/>
   <rect x="2423.4" y="1414.4" width="4.2" height="3.6"/><path d="M2425.5 1418 V1426.6"/>
  </g>
  <g>
   <path d="M2519.2 1412.4 H2535.4 V1424.4 H2526 L2523 1427.6 V1424.4 H2519.2Z" fill="#f4f4f4"/>
   <path d="M2521.6 1415.4 H2533 M2521.6 1418.2 H2533 M2521.6 1421 H2529" stroke="#232425" stroke-width="1"/>
   <circle cx="2534.4" cy="1427.3" r="7.6" fill="#232425" stroke="#7a7a7a" stroke-width="1"/>
   <text x="2534.5" y="1431.4" text-anchor="middle" font-family="Liberation Sans, sans-serif" font-size="11.5" fill="#f4f4f4">1</text>
  </g>
 </svg>
</div>

<!-- text layer -->
<div class="t" style="left:64.65px;top:15.00px;font-size:42.5px;color:#ebebeb;transform:scaleX(0.8901);transform-origin:0 0;-webkit-text-stroke:0.7px #393c40;">OLYMPUS</div>
<div class="t" style="left:259.80px;top:15.00px;font-size:42.5px;color:#ebebeb;transform:scaleX(0.9368);transform-origin:0 0;-webkit-text-stroke:0.7px #393c40;">VS200</div>
<div class="t" style="left:391.20px;top:15.00px;font-size:42.5px;color:#ebebeb;transform:scaleX(0.9141);transform-origin:0 0;-webkit-text-stroke:0.7px #393c40;">ASW</div>
<div class="t" style="left:1597.20px;top:13.80px;font-size:18.5px;color:#ececec;letter-spacing:-1.036px;">Batch Scan</div>
<div class="t" style="left:1606.00px;top:44.00px;font-size:14.5px;color:#ececec;letter-spacing:-0.764px;">Scan Images</div>
<div class="t" style="left:1741.30px;top:45.75px;font-size:14.5px;color:#6e7174;letter-spacing:-0.629px;">Scan Project</div>
<div class="t" style="left:1890.00px;top:45.75px;font-size:14.5px;color:#6e7174;letter-spacing:-0.534px;">Overview</div>
<div class="t" style="left:2040.90px;top:45.75px;font-size:14.5px;color:#6e7174;letter-spacing:-0.476px;">Detail</div>
<div class="t" style="left:2180.60px;top:45.75px;font-size:14.5px;color:#73818c;letter-spacing:-0.858px;">Finish</div>
<div class="t" style="left:2438.70px;top:-3.00px;font-size:68px;color:#e8e8e8;">?</div>
<div class="t" style="left:12.90px;top:129.50px;font-size:14.5px;color:#ececec;letter-spacing:-0.929px;">Exchange Trays</div>
<div class="t" style="left:162.00px;top:129.50px;font-size:14.5px;color:#ececec;letter-spacing:-1.087px;">Trays</div>
<div class="t" style="left:260.00px;top:129.50px;font-size:14.5px;color:#ececec;letter-spacing:-0.656px;">Gallery</div>
<div class="t" style="left:366.00px;top:129.50px;font-size:14.5px;color:#ececec;letter-spacing:-0.578px;">Image</div>
<div class="t" style="left:2341.80px;top:119.90px;font-size:14.5px;color:#ececec;letter-spacing:-0.415px;">Show Upload</div>
<div class="t" style="left:2364.70px;top:138.70px;font-size:14.5px;color:#ececec;letter-spacing:-0.842px;">Status</div>
<div class="t" style="left:2458.40px;top:129.60px;font-size:14.5px;color:#ececec;letter-spacing:-0.474px;">Open Log File</div>
<div class="t" style="left:53.30px;top:191.75px;font-size:14.5px;color:#4b4b4b;">1</div>
<div class="t" style="left:53.50px;top:225.55px;font-size:14.5px;color:#4b4b4b;">2</div>
<div class="t" style="left:53.50px;top:259.35px;font-size:14.5px;color:#4b4b4b;">3</div>
<div class="t" style="left:53.50px;top:293.15px;font-size:14.5px;color:#4b4b4b;">4</div>
<div class="t" style="left:53.50px;top:326.95px;font-size:14.5px;color:#4b4b4b;">5</div>
<div class="t" style="left:53.50px;top:360.75px;font-size:14.5px;color:#4b4b4b;">6</div>
<div class="t" style="left:53.50px;top:394.55px;font-size:14.5px;color:#4b4b4b;">7</div>
<div class="t" style="left:53.50px;top:428.35px;font-size:14.5px;color:#4b4b4b;">8</div>
<div class="t" style="left:53.50px;top:462.15px;font-size:14.5px;color:#4b4b4b;">9</div>
<div class="t" style="left:45.00px;top:495.95px;font-size:14.5px;color:#4b4b4b;letter-spacing:0.059px;">10</div>
<div class="t" style="left:45.00px;top:529.75px;font-size:14.5px;color:#4b4b4b;letter-spacing:0.059px;">11</div>
<div class="t" style="left:45.00px;top:563.55px;font-size:14.5px;color:#4b4b4b;letter-spacing:0.059px;">12</div>
<div class="t" style="left:45.00px;top:597.35px;font-size:14.5px;color:#4b4b4b;letter-spacing:0.059px;">13</div>
<div class="t" style="left:45.00px;top:631.15px;font-size:14.5px;color:#4b4b4b;letter-spacing:0.059px;">14</div>
<div class="t" style="left:45.00px;top:664.95px;font-size:14.5px;color:#4b4b4b;letter-spacing:0.059px;">15</div>
<div class="t" style="left:45.00px;top:698.75px;font-size:14.5px;color:#4b4b4b;letter-spacing:0.059px;">16</div>
<div class="t" style="left:45.00px;top:732.55px;font-size:14.5px;color:#4b4b4b;letter-spacing:0.059px;">17</div>
<div class="t" style="left:45.00px;top:766.35px;font-size:14.5px;color:#4b4b4b;letter-spacing:0.059px;">18</div>
<div class="t" style="left:45.00px;top:800.15px;font-size:14.5px;color:#4b4b4b;letter-spacing:0.059px;">19</div>
<div class="t" style="left:45.00px;top:833.95px;font-size:14.5px;color:#4b4b4b;letter-spacing:0.059px;">20</div>
<div class="t" style="left:45.00px;top:867.75px;font-size:14.5px;color:#f2f2f2;letter-spacing:0.059px;">21</div>
<div class="t" style="left:45.00px;top:901.55px;font-size:14.5px;color:#50606a;letter-spacing:0.059px;">22</div>
<div class="t" style="left:45.00px;top:935.35px;font-size:14.5px;color:#4b4b4b;letter-spacing:0.059px;">23</div>
<div class="t" style="left:45.00px;top:969.15px;font-size:14.5px;color:#4b4b4b;letter-spacing:0.059px;">24</div>
<div class="t" style="left:45.00px;top:1002.95px;font-size:14.5px;color:#4b4b4b;letter-spacing:0.059px;">25</div>
<div class="t" style="left:45.00px;top:1036.75px;font-size:14.5px;color:#4b4b4b;letter-spacing:0.059px;">26</div>
<div class="t" style="left:45.00px;top:1070.55px;font-size:14.5px;color:#4b4b4b;letter-spacing:0.059px;">27</div>
<div class="t" style="left:45.00px;top:1104.35px;font-size:14.5px;color:#4b4b4b;letter-spacing:0.059px;">28</div>
<div class="t" style="left:45.00px;top:1138.15px;font-size:14.5px;color:#4b4b4b;letter-spacing:0.059px;">29</div>
<div class="t" style="left:45.00px;top:1171.95px;font-size:14.5px;color:#4b4b4b;letter-spacing:0.059px;">30</div>
<div class="t" style="left:45.00px;top:1205.75px;font-size:14.5px;color:#4b4b4b;letter-spacing:0.059px;">31</div>
<div class="t" style="left:45.00px;top:1239.55px;font-size:14.5px;color:#4b4b4b;letter-spacing:0.059px;">32</div>
<div class="t" style="left:45.00px;top:1273.35px;font-size:14.5px;color:#4b4b4b;letter-spacing:0.059px;">33</div>
<div class="t" style="left:45.00px;top:1307.15px;font-size:14.5px;color:#4b4b4b;letter-spacing:0.059px;">34</div>
<div class="t" style="left:45.00px;top:1340.95px;font-size:14.5px;color:#4b4b4b;letter-spacing:0.059px;">35</div>
<div class="t" style="left:105.00px;top:185.00px;font-size:15.5px;color:#f2f2f2;letter-spacing:-0.760px;">Tray 21</div>
<div class="t" style="left:105.00px;top:783.00px;font-size:15.5px;color:#6d6d6d;letter-spacing:-0.560px;">Tray 22</div>
<div class="t" style="left:112.30px;top:214.70px;font-size:17.5px;color:#4d4d4d;">1</div>
<div class="t" style="left:237.90px;top:724.70px;font-size:13.5px;color:#4a4a4a;letter-spacing:-1.012px;">H_E</div>
<div class="t" style="left:403.97px;top:214.70px;font-size:17.5px;color:#f2f2f2;">2</div>
<div class="t" style="left:529.57px;top:724.70px;font-size:13.5px;color:#f2f2f2;letter-spacing:-1.012px;">H_E</div>
<div class="t" style="left:695.64px;top:214.70px;font-size:17.5px;color:#f2f2f2;">3</div>
<div class="t" style="left:821.24px;top:724.70px;font-size:13.5px;color:#f2f2f2;letter-spacing:-1.012px;">H_E</div>
<div class="t" style="left:987.31px;top:214.70px;font-size:17.5px;color:#4d4d4d;">4</div>
<div class="t" style="left:1112.91px;top:724.70px;font-size:13.5px;color:#4a4a4a;letter-spacing:-1.012px;">H_E</div>
<div class="t" style="left:1278.98px;top:214.70px;font-size:17.5px;color:#4d4d4d;">5</div>
<div class="t" style="left:1404.58px;top:724.70px;font-size:13.5px;color:#4a4a4a;letter-spacing:-1.012px;">H_E</div>
<div class="t" style="left:1570.65px;top:214.70px;font-size:17.5px;color:#4d4d4d;">6</div>
<div class="t" style="left:1696.25px;top:724.70px;font-size:13.5px;color:#4a4a4a;letter-spacing:-1.012px;">H_E</div>
<div class="t" style="left:203.80px;top:470.00px;font-size:24px;color:#4b4b4b;letter-spacing:-0.476px;">Excluded</div>
<div class="t" style="left:1080.01px;top:455.00px;font-size:24px;color:#494949;letter-spacing:-0.113px;">Slide not</div>
<div class="t" style="left:1083.21px;top:486.00px;font-size:24px;color:#494949;letter-spacing:-0.056px;">inserted</div>
<div class="t" style="left:1371.68px;top:455.00px;font-size:24px;color:#494949;letter-spacing:-0.113px;">Slide not</div>
<div class="t" style="left:1374.88px;top:486.00px;font-size:24px;color:#494949;letter-spacing:-0.056px;">inserted</div>
<div class="t" style="left:1663.35px;top:455.00px;font-size:24px;color:#494949;letter-spacing:-0.113px;">Slide not</div>
<div class="t" style="left:1666.55px;top:486.00px;font-size:24px;color:#494949;letter-spacing:-0.056px;">inserted</div>
<div class="t" style="left:521.70px;top:743.70px;font-size:13.5px;color:#f2f2f2;letter-spacing:-0.089px;">Slide-1</div>
<div class="t" style="left:813.10px;top:744.00px;font-size:13.5px;color:#f2f2f2;letter-spacing:0.095px;">Slide-2</div>
<div class="t" style="left:486.00px;top:470.00px;font-size:24px;color:#f4f4f4;letter-spacing:-0.669px;">Scanning...</div>
<div class="t" style="left:531.40px;top:692.40px;font-size:13.5px;color:#f2f2f2;letter-spacing:-0.233px;">0 %</div>
<div class="t" style="left:891.90px;top:1076.75px;font-size:24px;color:#676767;letter-spacing:-0.300px;">Tray not inserted</div>
<div class="t" style="left:483.10px;top:277.10px;font-size:18.5px;color:#1f2427;font-family:'Liberation Serif',serif;font-weight:700;letter-spacing:-0.098px;">PSC-0004644_4</div>
<div class="t" style="left:483.80px;top:299.10px;font-size:16px;color:#1f2427;font-family:'Liberation Serif',serif;font-weight:700;letter-spacing:0.362px;">AB-PAS  3-23-22</div>
<div class="t" style="left:494.80px;top:318.75px;font-size:18.5px;color:#1f2427;font-family:'Liberation Serif',serif;font-weight:700;letter-spacing:0.212px;">5um  sec001</div>
<div class="t" style="left:489.00px;top:340.50px;font-size:18.5px;color:#1f2427;font-family:'Liberation Serif',serif;font-weight:700;letter-spacing:-0.190px;">PSC-TK-1558</div>
<div class="t" style="left:774.50px;top:281.60px;font-size:18.5px;color:#111111;font-family:'Liberation Serif',serif;font-weight:700;letter-spacing:-0.040px;">PSC-0004639_2</div>
<div class="t" style="left:774.00px;top:303.75px;font-size:9px;color:#111111;font-family:'Liberation Serif',serif;font-weight:700;letter-spacing:0.222px;">SiriusRedwFastGreen  3-23-22</div>
<div class="t" style="left:785.40px;top:314.70px;font-size:18.5px;color:#111111;font-family:'Liberation Serif',serif;font-weight:700;letter-spacing:0.362px;">5um  sec002</div>
<div class="t" style="left:780.30px;top:337.00px;font-size:18.5px;color:#111111;font-family:'Liberation Serif',serif;font-weight:700;letter-spacing:-0.160px;">PSC-TK-1558</div>
<div class="t" style="left:1876.50px;top:177.00px;font-size:15.5px;color:#ececec;letter-spacing:-0.285px;">Batch</div>
<div class="t" style="left:1876.50px;top:215.75px;font-size:14px;color:#ececec;letter-spacing:-0.127px;">Average time per slide:</div>
<div class="t" style="left:2023.10px;top:215.75px;font-size:14px;color:#ececec;letter-spacing:0.014px;">calculating</div>
<div class="t" style="left:1876.50px;top:253.00px;font-size:14px;color:#ececec;letter-spacing:-0.426px;">Processed slides:</div>
<div class="t" style="left:2023.10px;top:253.00px;font-size:14px;color:#ececec;letter-spacing:-0.006px;">0 of 2</div>
<div class="t" style="left:2203.70px;top:290.00px;font-size:14px;color:#ececec;letter-spacing:-0.713px;">0 %</div>
<div class="t" style="left:1876.50px;top:325.75px;font-size:14px;color:#ececec;letter-spacing:-0.345px;">Successful scans: 0, warnings: 0, errors: 0</div>
<div class="t" style="left:1907.00px;top:365.80px;font-size:14px;color:#ececec;letter-spacing:-0.295px;">Results table</div>
<div class="t" style="left:1906.50px;top:396.40px;font-size:14px;color:#ececec;letter-spacing:-0.472px;">Show successful scans</div>
<div class="t" style="left:1890.00px;top:434.00px;font-size:14px;color:#ececec;letter-spacing:-0.775px;">Type</div>
<div class="t" style="left:1930.50px;top:434.00px;font-size:14px;color:#ececec;letter-spacing:-0.260px;">Slide</div>
<div class="t" style="left:2237.40px;top:434.00px;font-size:14px;color:#ececec;letter-spacing:-0.421px;">Status</div>
<div class="t" style="left:1876.00px;top:846.00px;font-size:15.5px;color:#ececec;letter-spacing:0.135px;">Current slide</div>
<div class="t" style="left:1876.00px;top:885.50px;font-size:14px;color:#ececec;letter-spacing:-0.046px;">Estimated time</div>
<div class="t" style="left:1876.00px;top:903.70px;font-size:14px;color:#ececec;">remaining:</div>
<div class="t" style="left:2023.00px;top:903.70px;font-size:14px;color:#ececec;letter-spacing:-0.016px;">calculating</div>
<div class="t" style="left:1876.00px;top:940.00px;font-size:14px;color:#ececec;letter-spacing:-0.364px;">Processed frames:</div>
<div class="t" style="left:2023.00px;top:940.00px;font-size:14px;color:#ececec;letter-spacing:-0.016px;">0 of 556</div>
<div class="t" style="left:2203.50px;top:977.00px;font-size:14px;color:#ececec;letter-spacing:-0.562px;">0 %</div>
<div class="t" style="left:1882.00px;top:1019.60px;font-size:14px;color:#ececec;letter-spacing:-0.018px;">Autofocus result:</div>
<div class="t" style="left:1876.00px;top:1350.00px;font-size:14px;color:#ececec;letter-spacing:0.011px;">Detected focus position: Z=-137 µm (Start position: -135 µm)</div>
<div class="t" style="left:30.90px;top:1387.00px;font-size:15px;color:#ececec;letter-spacing:-1.015px;">Finished</div>
<div class="t" style="left:140.20px;top:1387.00px;font-size:15px;color:#ececec;letter-spacing:-0.662px;">Current Slide</div>
<div class="t" style="left:278.30px;top:1387.00px;font-size:15px;color:#ececec;letter-spacing:-1.125px;">Exchanged</div>
<div class="t" style="left:628.20px;top:1387.00px;font-size:15px;color:#ececec;letter-spacing:-0.728px;">Selected: Tray 21 / Slide 2</div>
<div class="t" style="left:88.80px;top:1412.00px;font-size:15.5px;color:#3a3a3a;letter-spacing:-0.631px;z-index:6;">Type here to search</div>
<div class="t" style="left:2254.80px;top:1411.50px;font-size:14.5px;color:#f0f0f0;letter-spacing:-1.087px;z-index:6;">74°F</div>
<div class="t" style="left:2290.30px;top:1411.50px;font-size:14.5px;color:#f0f0f0;letter-spacing:-0.931px;z-index:6;">Sunny</div>
<div class="t" style="left:2454.30px;top:1404.00px;font-size:12.5px;color:#f0f0f0;letter-spacing:-0.810px;z-index:6;">4:02 PM</div>
<div class="t" style="left:2449.60px;top:1421.70px;font-size:12.5px;color:#f0f0f0;letter-spacing:-0.564px;z-index:6;">5/24/2023</div>
</div></body></html>
